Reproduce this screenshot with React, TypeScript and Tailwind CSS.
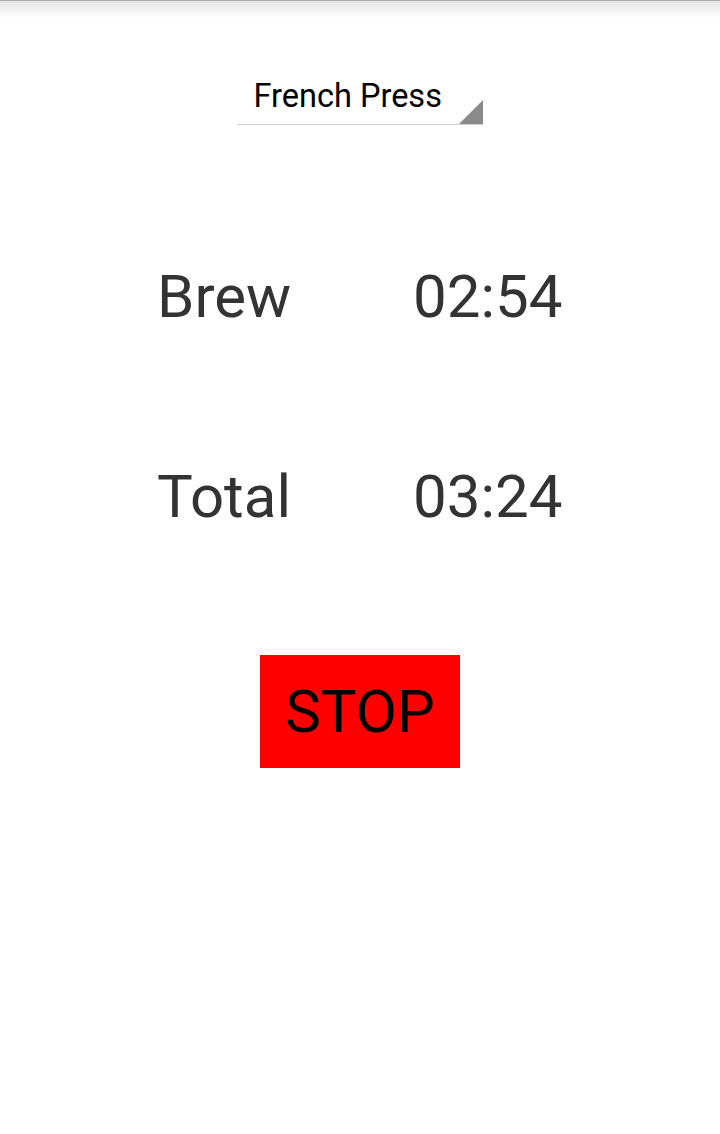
const rows = [
  { label: 'Brew', value: '02:54' },
  { label: 'Total', value: '03:24' },
];

export default function App() {
  return (
    <div
      className="relative min-h-[1134px] w-[720px] bg-white"
      style={{ fontFamily: 'Roboto, "Noto Sans", sans-serif' }}
    >
      {/* action bar shadow */}
      <div className="pointer-events-none absolute inset-x-0 top-0 h-[18px] bg-gradient-to-b from-[#e2e2e2] to-white">
        <div className="h-[1px] bg-[#a8a8a8]" />
      </div>

      <div className="flex flex-col items-center pt-[76px]">
        {/* spinner */}
        <div className="relative w-[245px] border-b-[1.5px] border-[#cfcfcf] pb-[8px] pl-[16px]">
          <span className="text-[32.5px] leading-[40px] text-black">French Press</span>
          <svg className="absolute bottom-0 right-0" width="24" height="24" viewBox="0 0 24 24">
            <polygon points="24,0 24,24 0,24" fill="#8a8a8a" />
          </svg>
        </div>

        {/* timers */}
        <div className="mt-[137px] flex w-full flex-col gap-[130px]">
          {rows.map((r) => (
            <div key={r.label} className="flex items-center text-[60px] leading-[70px] text-[#333333]">
              <span className="w-[413px] pl-[157px]">{r.label}</span>
              <span>{r.value}</span>
            </div>
          ))}
        </div>

        <button className="mt-[123px] flex h-[113px] w-[200px] items-center justify-center bg-[#ff0000] text-[60px] text-black">
          STOP
        </button>
      </div>
    </div>
  );
}
